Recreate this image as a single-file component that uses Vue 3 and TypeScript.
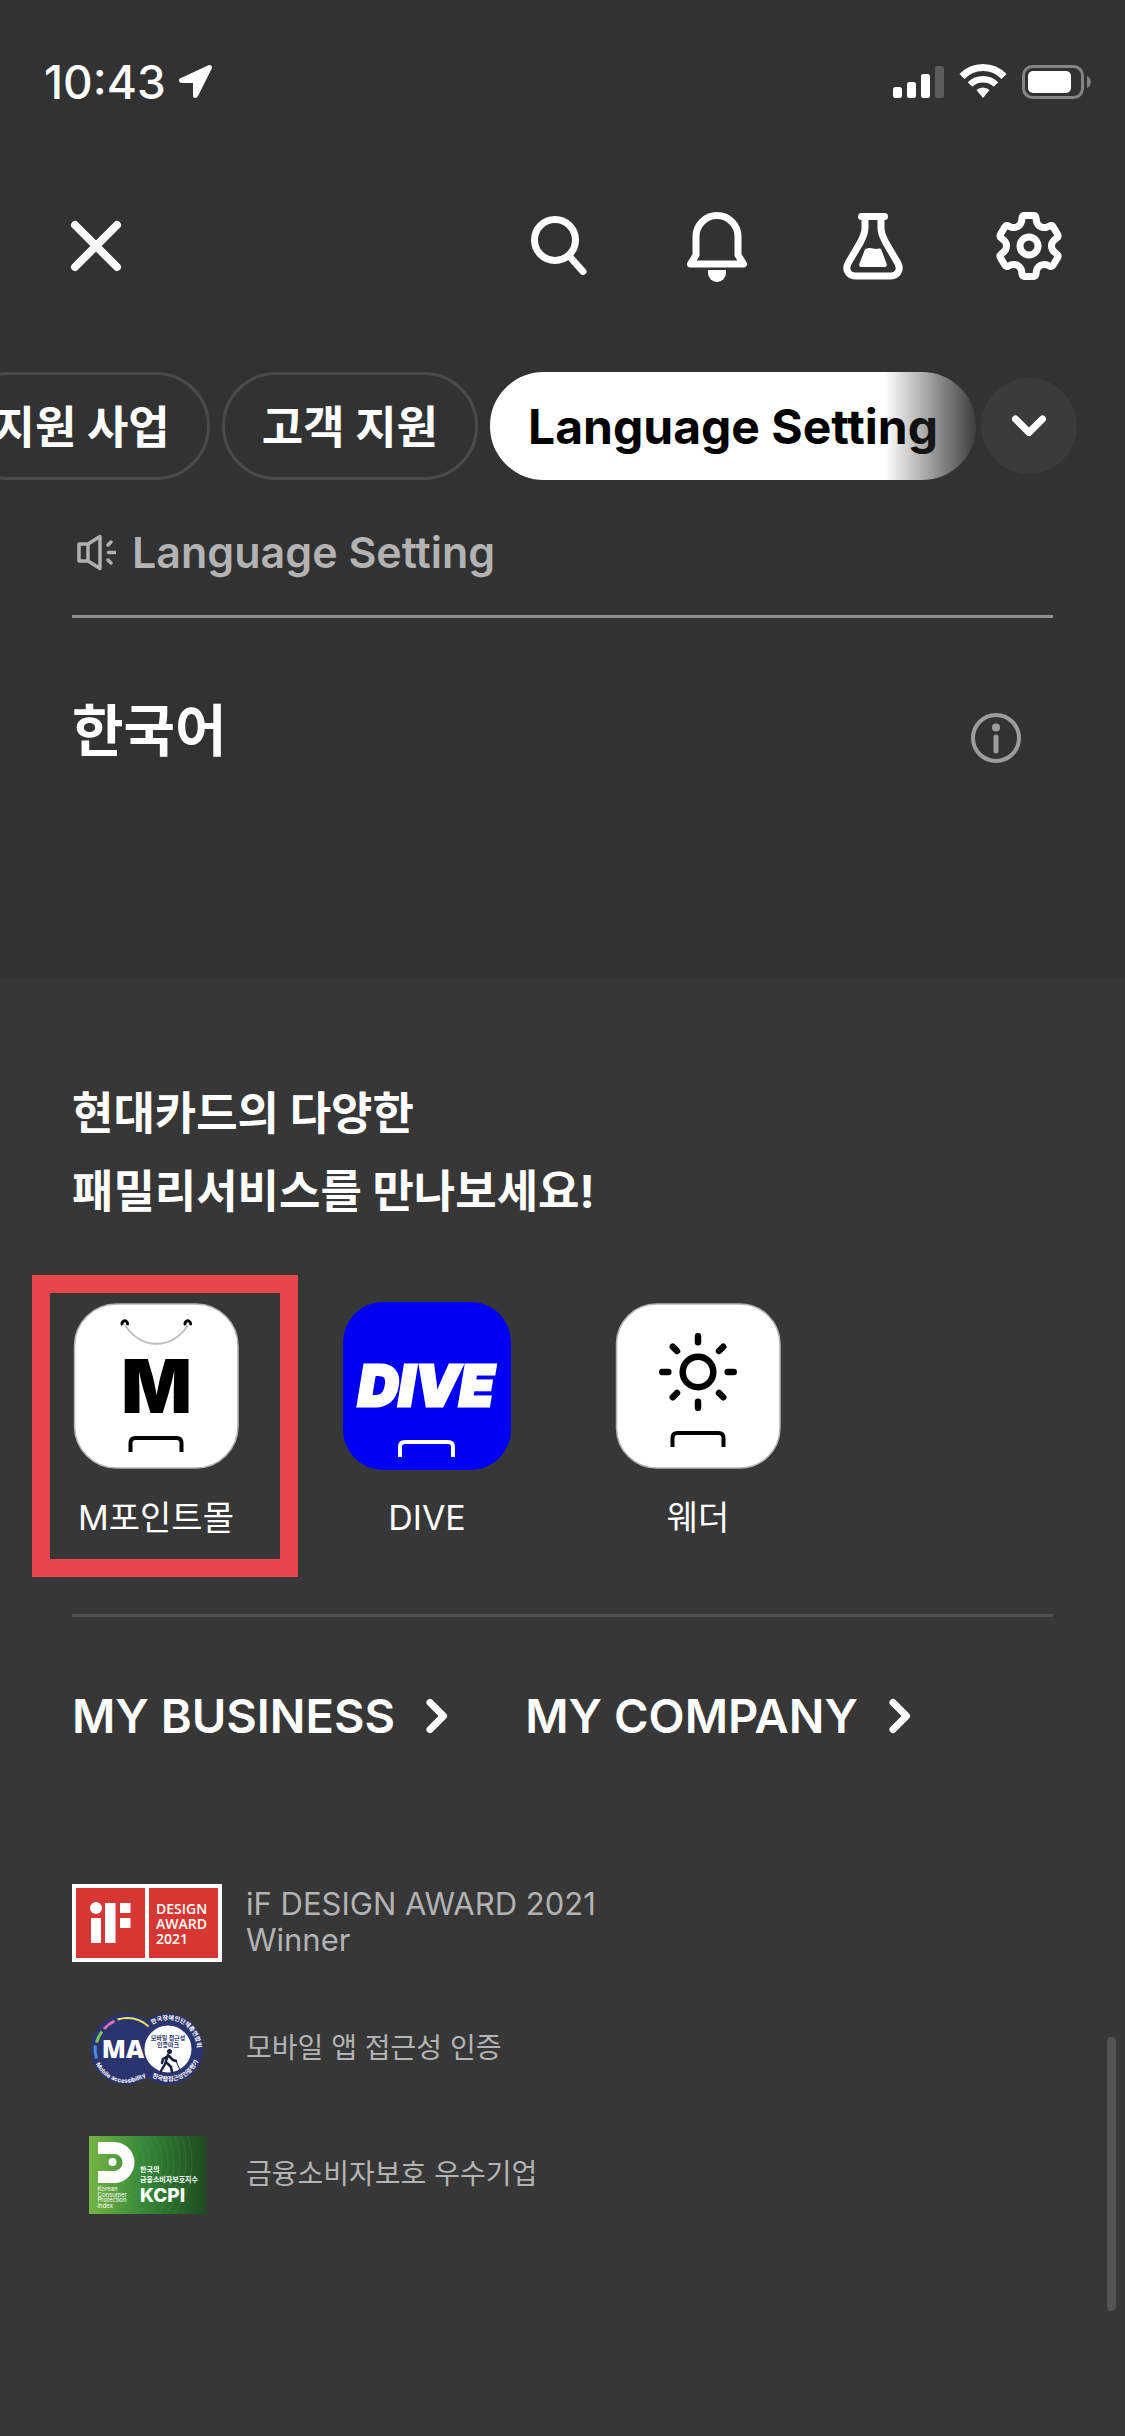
<script setup lang="ts">
interface Tab {
  label: string
  active: boolean
}

interface Service {
  id: 'mpoint' | 'dive' | 'weather'
  label: string
}

interface Award {
  id: 'if' | 'ma' | 'kcpi'
  lines: string[]
}

const tabs: Tab[] = [
  { label: '지원 사업', active: false },
  { label: '고객 지원', active: false },
  { label: 'Language Setting', active: true },
]

const services: Service[] = [
  { id: 'mpoint', label: 'M포인트몰' },
  { id: 'dive', label: 'DIVE' },
  { id: 'weather', label: '웨더' },
]

const companyLinks: string[] = ['MY BUSINESS', 'MY COMPANY']

const awards: Award[] = [
  { id: 'if', lines: ['iF DESIGN AWARD 2021', 'Winner'] },
  { id: 'ma', lines: ['모바일 앱 접근성 인증'] },
  { id: 'kcpi', lines: ['금융소비자보호 우수기업'] },
]

/* Six-toothed gear outline: one tooth, turned by 60 degrees for each step. */
function gearPath(cx: number, cy: number): string {
  const at = (x: number, y: number, k: number): string => {
    const a = (k * Math.PI) / 3
    const px = cx + x * Math.cos(a) - y * Math.sin(a)
    const py = cy + x * Math.sin(a) + y * Math.cos(a)
    return `${px.toFixed(1)} ${py.toFixed(1)}`
  }
  let d = `M${at(-4.5, -30.5, 0)}`
  for (let k = 0; k < 6; k++) {
    d += `L${at(4.5, -30.5, k)}`
    d += `Q${at(6.6, -30.5, k)} ${at(7, -28, k)}`
    d += `L${at(7.4, -25, k)}`
    d += `C${at(8.4, -20, k)} ${at(-8.4, -20, k + 1)} ${at(-7.4, -25, k + 1)}`
    d += `L${at(-7, -28, k + 1)}`
    d += `Q${at(-6.6, -30.5, k + 1)} ${at(-4.5, -30.5, k + 1)}`
  }
  return d + 'Z'
}

const gear = gearPath(36, 36)
const rays: number[] = [0, 45, 90, 135, 180, 225, 270, 315]
const ripples: number[] = [20, 26, 32, 38, 44, 50, 56, 62, 68, 74, 80]
</script>

<template>
  <div class="page">
    <div class="status">
      <div class="clock">
        <span>10:43</span>
        <svg width="36" height="36" viewBox="0 0 36 36" aria-hidden="true">
          <path d="M31.5 3.5 3.5 16.500H17.500V31.500Z" fill="#fff" stroke="#fff" stroke-width="5" stroke-linejoin="round" />
        </svg>
      </div>
      <svg width="200" height="36" viewBox="0 0 200 36" aria-hidden="true">
        <g fill="#fff">
          <rect x="0" y="23" width="9" height="11" rx="2.500" />
          <rect x="14" y="18" width="9" height="16" rx="2.500" />
          <rect x="28" y="10" width="9" height="24" rx="2.500" />
          <rect x="42" y="2" width="9" height="32" rx="2.500" fill="#5c5c5c" />
        </g>
        <g fill="none" stroke="#fff">
          <path d="M69 12.500a29 29 0 0 1 42 0" stroke-width="7" />
          <path d="M77 20.500a18.500 18.500 0 0 1 26 0" stroke-width="6.500" />
        </g>
        <path d="M83.500 26a9.500 9.500 0 0 1 13 0L90 34z" fill="#fff" />
        <rect x="130.500" y="2.500" width="59" height="31" rx="9" fill="none" stroke="#848484" stroke-width="3" />
        <rect x="135" y="7" width="43" height="22" rx="5" fill="#fff" />
        <path d="M194 12c5 2 5 10 0 12z" fill="#848484" />
      </svg>
    </div>

    <header class="topbar">
      <button class="icon-button close" type="button" aria-label="닫기">
        <svg width="72" height="72" viewBox="0 0 72 72">
          <path d="M15 15 57 57M57 15 15 57" class="line bold" />
        </svg>
      </button>
      <button class="icon-button" type="button" aria-label="검색">
        <svg width="72" height="72" viewBox="0 0 72 72">
          <circle cx="30" cy="30" r="20.500" class="line" />
          <path d="M45 47 58 61.500" class="line" />
        </svg>
      </button>
      <button class="icon-button" type="button" aria-label="알림">
        <svg width="72" height="72" viewBox="0 0 72 72">
          <path d="M15 26.500a21 21 0 0 1 42 0V45l5.500 9h-53L15 45z" class="line" />
          <path d="M27 60h18v3a9 9 0 0 1-18 0z" fill="#fff" />
        </svg>
      </button>
      <button class="icon-button" type="button" aria-label="실험실">
        <svg width="72" height="72" viewBox="0 0 72 72">
          <path d="M24.500 6.500h23" class="line" />
          <path d="M28 8v10c0 6-2 9-5 15L11.500 52.500c-4.500 8 1 13.500 6.500 13.500h36c5.500 0 11-5.500 6.500-13.500L49 33c-3-6-5-9-5-15V8" class="line" />
          <path d="M30.500 38.500c4-1.500 7 1.500 11.500 0 1.500-.3 2 .5 2.500 1.500l5 13.500c.8 2 0 3.500-2 3.500h-23c-2 0-2.800-1.500-2-3.500l5-13c.5-1.500 1.500-2 3-2z" fill="#fff" />
        </svg>
      </button>
      <button class="icon-button" type="button" aria-label="설정">
        <svg width="72" height="72" viewBox="0 0 72 72">
          <path :d="gear" class="line" />
          <circle cx="36" cy="36" r="9" class="line" />
        </svg>
      </button>
    </header>

    <nav class="tabbar">
      <div class="tabs">
        <button v-for="tab in tabs" :key="tab.label" type="button" class="tab" :class="{ active: tab.active }">
          {{ tab.label }}
        </button>
        <span class="fade"></span>
      </div>
      <button class="expand" type="button" aria-label="펼치기">
        <svg width="48" height="48" viewBox="0 0 48 48">
          <path d="M10.500 17 24 30.500 37.500 17" class="line" />
        </svg>
      </button>
    </nav>

    <main class="language">
      <h2 class="language-title">
        <svg width="44" height="44" viewBox="0 0 44 44" aria-hidden="true">
          <g fill="none" stroke="#b0b0b0" stroke-width="3.500" stroke-linejoin="round" stroke-linecap="round">
            <path d="M7 14h9v17H7zM16 14 28 6.500v32L16 31" />
            <path d="M36.500 22.500h7M36 15l3-3M36 30l3 3" />
          </g>
        </svg>
        Language Setting
      </h2>
      <div class="language-row">
        <a class="language-name" href="#ko">한국어</a>
        <button class="info" type="button" aria-label="안내">
          <svg width="52" height="52" viewBox="0 0 52 52">
            <circle cx="26" cy="26" r="23" fill="none" stroke="#9c9c9c" stroke-width="4" />
            <circle cx="26" cy="15.500" r="4" fill="#9c9c9c" />
            <path d="M26 25v14" stroke="#9c9c9c" stroke-width="5" stroke-linecap="round" />
          </svg>
        </button>
      </div>
    </main>

    <footer class="family">
      <h3 class="family-title">현대카드의 다양한<br />패밀리서비스를 만나보세요!</h3>

      <div class="services">
        <a v-for="service in services" :key="service.id" class="service" :class="{ marked: service.id === 'mpoint' }" href="#service">
          <svg v-if="service.id === 'mpoint'" width="168" height="168" viewBox="0 0 168 168" aria-hidden="true">
            <rect x="2.500" y="2" width="163.500" height="164" rx="42" fill="#fff" stroke="#b4b4b4" stroke-width="1.500" />
            <path d="M53 23c16 25 47 25 63 0" fill="none" stroke="#bdbdbd" stroke-width="2" />
            <path d="M50.500 23a2.700 2.700 0 1 1 4.500 0M113.500 23a2.700 2.700 0 1 1 4.500 0" fill="none" stroke="#000" stroke-width="2.800" />
            <text x="84.500" y="111" text-anchor="middle" class="mark-m">M</text>
            <path d="M58.500 150v-9q0-5 5-5h41q5 0 5 5v9" fill="none" stroke="#000" stroke-width="4" />
          </svg>
          <svg v-else-if="service.id === 'dive'" width="168" height="168" viewBox="0 0 168 168" aria-hidden="true">
            <rect width="168" height="168" rx="40" fill="#0000f5" />
            <text x="83" y="104" text-anchor="middle" class="mark-dive">DIVE</text>
            <path d="M57 155v-10q0-5 5-5h43q5 0 5 5v10" fill="none" stroke="#fff" stroke-width="4" />
          </svg>
          <svg v-else width="168" height="168" viewBox="0 0 168 168" aria-hidden="true">
            <rect x="2.500" y="2" width="163.500" height="164" rx="40" fill="#fff" stroke="#b4b4b4" stroke-width="1.500" />
            <g fill="none" stroke="#000" stroke-width="6.500" stroke-linecap="round">
              <circle cx="84" cy="70" r="15.300" />
              <path v-for="ray in rays" :key="ray" d="M84 34.300v6" :transform="`rotate(${ray} 84 70)`" />
            </g>
            <path d="M58.500 145v-9q0-5 5-5h41q5 0 5 5v9" fill="none" stroke="#000" stroke-width="4" />
          </svg>
          <span class="service-label">{{ service.label }}</span>
        </a>
      </div>

      <div class="company">
        <a v-for="link in companyLinks" :key="link" class="company-link" href="#company">
          {{ link }}
          <svg width="24" height="36" viewBox="0 0 24 36" aria-hidden="true">
            <path d="M5 4.500 18.500 18 5 31.500" class="line" />
          </svg>
        </a>
      </div>

      <ul class="awards">
        <li v-for="award in awards" :key="award.id" class="award">
          <svg v-if="award.id === 'if'" width="150" height="78" viewBox="0 0 150 78" aria-hidden="true">
            <rect width="150" height="78" fill="#fff" />
            <rect x="4" y="4" width="69" height="70" fill="#d73732" />
            <rect x="77" y="4" width="69" height="70" fill="#d73732" />
            <g fill="#fff">
              <circle cx="24" cy="24" r="6" />
              <rect x="19" y="34" width="10" height="25" />
              <rect x="33" y="19" width="10.500" height="40" />
              <rect x="48" y="19" width="10.500" height="10" />
              <rect x="48" y="34" width="10.500" height="10" />
            </g>
            <g class="mark-if">
              <text x="84" y="30">DESIGN</text>
              <text x="84" y="45">AWARD</text>
              <text x="84" y="60">2021</text>
            </g>
          </svg>
          <svg v-else-if="award.id === 'ma'" width="150" height="78" viewBox="0 0 150 78" aria-hidden="true">
            <circle cx="54" cy="39" r="35.500" fill="#2c3470" />
            <circle cx="96" cy="39" r="35.500" fill="#2c3470" />
            <circle cx="96" cy="39" r="23.500" fill="#fff" />
            <g fill="none" stroke-width="3">
              <path d="M24.500 48.500a31 31 0 0 1 -1.200-13" stroke="#4d8fd6" />
              <path d="M24.500 32.500a31 31 0 0 1 5.500-11" stroke="#7dc05c" />
              <path d="M32 19a31 31 0 0 1 10.500-8" stroke="#dc6fb4" />
              <path d="M45.500 9.500q18-5 31 7" stroke="#ece85c" stroke-width="2" />
            </g>
            <path id="ring-left" d="M24 54A33 33 0 0 0 75 65" fill="none" />
            <path id="ring-top" d="M80.500 14.500A29 29 0 0 1 121.500 53" fill="none" />
            <path id="ring-bottom" d="M80 67A33 33 0 0 0 126 52" fill="none" />
            <text class="ring"><textPath href="#ring-left">Mobile accessibility</textPath></text>
            <text class="ring"><textPath href="#ring-top">한국장애인단체총연합회</textPath></text>
            <text class="ring"><textPath href="#ring-bottom">한국웹접근성인증평가원</textPath></text>
            <text x="51" y="48" text-anchor="middle" class="mark-ma">MA</text>
            <text x="96" y="30" text-anchor="middle" class="tiny navy">모바일 접근성</text>
            <text x="96" y="37" text-anchor="middle" class="tiny navy">인증마크</text>
            <circle cx="97.500" cy="41.500" r="2.500" fill="#1c1f3d" />
            <path d="M96 45l-3 9-4 7M95 53l4 4 1 5M96 46l-5 3-1 4M97 46l4 4 3 1" fill="none" stroke="#1c1f3d" stroke-width="2.500" stroke-linecap="round" stroke-linejoin="round" />
            <path d="M104 51l4 9" stroke="#1c1f3d" stroke-width="1" />
          </svg>
          <svg v-else width="150" height="78" viewBox="0 0 150 78" aria-hidden="true">
            <defs>
              <linearGradient id="kcpi-green" x1="0" x2="1" y1="0" y2="0">
                <stop offset="0" stop-color="#76b543" />
                <stop offset="0.450" stop-color="#37893a" />
                <stop offset="1" stop-color="#1d4b1f" />
              </linearGradient>
              <clipPath id="kcpi-clip"><rect x="17" width="117" height="78" /></clipPath>
            </defs>
            <rect x="17" width="117" height="78" fill="url(#kcpi-green)" />
            <g fill="none" stroke="#5da545" stroke-opacity="0.250" clip-path="url(#kcpi-clip)">
              <circle v-for="r in ripples" :key="r" cx="40" cy="26" :r="r" />
            </g>
            <path d="M26 6h16a20.500 20.500 0 0 1 0 41H26V35h16a8.500 8.500 0 0 0 0-17H26z" fill="#fff" />
            <circle cx="40.500" cy="26" r="4" fill="#fff" />
            <g fill="#fff">
              <text x="68" y="36" class="kcpi-ko">한국의</text>
              <text x="68" y="46" class="kcpi-ko">금융소비자보호지수</text>
              <text x="68" y="66" class="kcpi-name">KCPI</text>
              <g class="tiny">
                <text x="25.500" y="55">Korean</text>
                <text x="25.500" y="60.500">Consumer</text>
                <text x="25.500" y="66">Protection</text>
                <text x="25.500" y="71.500">Index</text>
              </g>
            </g>
          </svg>
          <p class="award-text" :class="{ latin: award.id === 'if' }">
            <span v-for="line in award.lines" :key="line">{{ line }}</span>
          </p>
        </li>
      </ul>
    </footer>

    <div class="scroll-thumb"></div>
  </div>
</template>

<style>
body {
  margin: 0;
  background: #373737;
}
</style>

<style scoped>
.page {
  position: relative;
  display: flex;
  flex-direction: column;
  min-height: 100vh;
  overflow: hidden;
  background: #323232;
  color: #fff;
  font-family: Inter, "Noto Sans CJK KR", sans-serif;
}

button {
  margin: 0;
  padding: 0;
  border: 0;
  background: none;
  color: inherit;
  font-family: inherit;
}

a {
  color: inherit;
  text-decoration: none;
}

svg {
  display: block;
  flex: none;
}

.line {
  fill: none;
  stroke: #fff;
  stroke-width: 7px;
  stroke-linecap: round;
  stroke-linejoin: round;
}

.line.bold {
  stroke-width: 8px;
}

.status {
  display: flex;
  justify-content: space-between;
  align-items: center;
  padding: 52px 32px 0 44px;
}

.clock {
  display: flex;
  align-items: center;
  gap: 12px;
  font-size: 46px;
  line-height: 60px;
  font-weight: 500;
}

.topbar {
  display: flex;
  gap: 84px;
  padding: 98px 60px 0;
}

.icon-button.close {
  margin-right: auto;
}

.tabbar {
  display: flex;
  align-items: center;
  padding: 90px 48px 0 0;
}

.tabs {
  position: relative;
  display: flex;
  flex: 1;
  justify-content: flex-end;
  gap: 12px;
  min-width: 0;
  padding-right: 5px;
  overflow: hidden;
}

.tab {
  box-sizing: border-box;
  flex: none;
  height: 108px;
  padding: 0 37px 4px;
  border: 3px solid #4b4b4b;
  border-radius: 54px;
  font-size: 45px;
  font-weight: 700;
  white-space: nowrap;
}

.tab.active {
  padding: 0 35px;
  border-color: #fff;
  background: #fff;
  color: #000;
  font-size: 48px;
}

.fade {
  position: absolute;
  top: 0;
  right: 0;
  width: 96px;
  height: 100%;
  background: linear-gradient(90deg, rgba(50, 50, 50, 0), #323232);
}

.expand {
  display: flex;
  flex: none;
  align-items: center;
  justify-content: center;
  width: 96px;
  height: 96px;
  border-radius: 50%;
  background: #3b3b3b;
}

.language {
  padding: 42px 72px 214px;
}

.language-title {
  display: flex;
  align-items: center;
  gap: 16px;
  margin: 0;
  padding-bottom: 33px;
  border-bottom: 3px solid #8f8f8f;
  color: #b3b3b3;
  font-size: 43px;
  line-height: 60px;
  font-weight: 600;
}

.language-row {
  display: flex;
  align-items: flex-end;
  justify-content: space-between;
  padding: 80px 31px 0 0;
}

.language-name {
  font-size: 56px;
  line-height: 66px;
  font-weight: 700;
}

.family {
  flex: 1;
  padding: 97px 72px 222px;
  background: #373737;
}

.family-title {
  margin: 0;
  font-size: 45px;
  line-height: 78px;
  font-weight: 700;
}

.services {
  display: flex;
  gap: 103px;
  margin-top: 71px;
  padding-bottom: 72px;
  border-bottom: 3px solid #505050;
}

.service {
  position: relative;
  display: flex;
  flex-direction: column;
  align-items: center;
  gap: 24px;
  width: 168px;
}

.service.marked::after {
  content: "";
  position: absolute;
  inset: -27px -58px -35px -40px;
  border: 18px solid #e8464a;
}

.service-label {
  font-size: 34px;
  line-height: 48px;
  white-space: nowrap;
}

.company {
  display: flex;
  gap: 76px;
  margin-top: 69px;
}

.company-link {
  display: flex;
  align-items: center;
  gap: 30px;
  font-size: 47px;
  line-height: 60px;
  font-weight: 600;
}

.awards {
  display: flex;
  flex-direction: column;
  gap: 48px;
  margin: 138px 0 0;
  padding: 0;
  list-style: none;
}

.award {
  display: flex;
  align-items: center;
  gap: 24px;
}

.award-text {
  display: flex;
  flex-direction: column;
  margin: 0;
  padding-bottom: 2px;
  color: #b3b3b3;
  font-size: 28px;
  line-height: 36px;
}

.award-text.latin {
  font-size: 31px;
}

.mark-m {
  font-size: 74px;
  font-weight: 900;
}

.mark-dive {
  fill: #fff;
  stroke: #fff;
  stroke-width: 3px;
  font-size: 56px;
  font-weight: 900;
  font-style: italic;
}

.mark-if {
  fill: #fff;
  font-family: "Open Sans", sans-serif;
  font-size: 14px;
  font-weight: 600;
}

.mark-ma {
  fill: #fff;
  font-family: "Open Sans", sans-serif;
  font-size: 25px;
  font-weight: 800;
}

.ring {
  fill: #fff;
  font-size: 6px;
  font-weight: 700;
}

.tiny {
  font-size: 6px;
}

.navy {
  fill: #2c3470;
  font-weight: 700;
}

.kcpi-ko {
  font-size: 7px;
  font-weight: 700;
}

.kcpi-name {
  font-size: 19px;
  font-weight: 800;
}

.scroll-thumb {
  position: absolute;
  right: 9px;
  bottom: 125px;
  width: 9px;
  height: 274px;
  border-radius: 5px;
  background: #545454;
}
</style>
